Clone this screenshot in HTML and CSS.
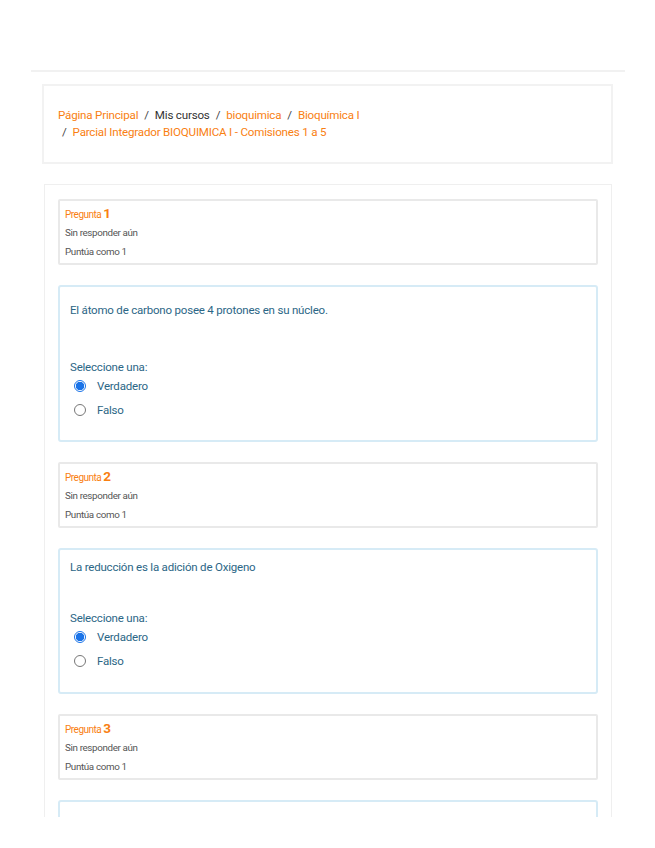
FILE: index.html
```html
<!DOCTYPE html>
<html lang="es">
<head>
<meta charset="utf-8">
<link rel="stylesheet" href="styles.css">
</head>
<body>
<div class="page">
  <div class="topbar"></div>
  <div class="container">
    <nav class="crumbs">
      <div class="crumb-line">
        <a class="link">Página Principal</a><span class="sep">/</span><span class="plain">Mis cursos</span><span class="sep">/</span><a class="link">bioquimica</a><span class="sep">/</span><a class="link">Bioquímica I</a>
      </div>
      <div class="crumb-line second">
        <span class="sep">/</span><a class="link">Parcial Integrador BIOQUIMICA I - Comisiones 1 a 5</a>
      </div>
    </nav>

    <main class="card">
      <section class="info">
        <div class="qno">Pregunta <b>1</b></div>
        <div class="meta">Sin responder aún</div>
        <div class="meta">Puntúa como 1</div>
      </section>
      <section class="content first">
        <p class="qtext">El átomo de carbono posee 4 protones en su núcleo.</p>
        <div class="prompt">Seleccione una:</div>
        <label class="opt"><span class="radio on"></span>Verdadero</label>
        <label class="opt"><span class="radio"></span>Falso</label>
      </section>

      <section class="info">
        <div class="qno">Pregunta <b>2</b></div>
        <div class="meta">Sin responder aún</div>
        <div class="meta">Puntúa como 1</div>
      </section>
      <section class="content">
        <p class="qtext">La reducción es la adición de Oxigeno</p>
        <div class="prompt">Seleccione una:</div>
        <label class="opt"><span class="radio on"></span>Verdadero</label>
        <label class="opt"><span class="radio"></span>Falso</label>
      </section>

      <section class="info">
        <div class="qno">Pregunta <b>3</b></div>
        <div class="meta">Sin responder aún</div>
        <div class="meta">Puntúa como 1</div>
      </section>
      <section class="content">
        <p class="qtext">&nbsp;</p>
      </section>
    </main>
  </div>
</div>
</body>
</html>
```

FILE: styles.css
```css
html, body {
  margin: 0;
  padding: 0;
  background: #fff;
}
body {
  font-family: Roboto, "Liberation Sans", sans-serif;
  color: #333;
}
.page {
  height: 817px;
  overflow: hidden;
}
.topbar {
  height: 70px;
  margin: 0 30px 0 31px;
  border-bottom: 2px solid #f1f1f1;
}
.container {
  padding: 12px 42px 0 42px;
  display: flex;
  flex-direction: column;
  gap: 20px;
}
.crumbs {
  height: 76px;
  border: 2px solid #f2f2f2;
  padding: 0 14px;
  display: flex;
  flex-direction: column;
  justify-content: center;
  font-size: 11.6px;
  letter-spacing: -0.2px;
  line-height: 17px;
}
.crumb-line {
  white-space: nowrap;
}
.crumb-line.second {
  padding-left: 4px;
}
.link {
  color: #f98012;
}
.plain {
  color: #333;
}
.sep {
  color: #444;
  margin: 0 6px;
}
.second .sep {
  margin-left: 0;
}
.card {
  margin: 0 1px 0 2px;
  border: 1px solid #efefef;
  padding: 14px 13px 0 13px;
  display: flex;
  flex-direction: column;
  gap: 20px;
}
.info {
  border: 2px solid #e9e9e9;
  border-radius: 2px;
  height: 58px;
  padding: 4px 5px 0 5px;
  box-sizing: content-box;
  font-size: 9.8px;
  color: #555;
  letter-spacing: -0.35px;
}
.qno {
  color: #f98012;
  font-size: 10px;
  letter-spacing: -0.5px;
  line-height: 17px;
}
.qno b {
  font-size: 13.5px;
  font-weight: 700;
  letter-spacing: 0;
}
.meta {
  line-height: 19px;
}
.content {
  border: 2px solid #d6ebf6;
  border-radius: 3px;
  padding: 8px 10px 19px 10px;
  color: #2b6686;
  font-size: 11.5px;
  letter-spacing: -0.2px;
  min-height: 60px;
}
.content.first {
  padding-top: 14px;
  padding-bottom: 18px;
}
.qtext {
  margin: 0 0 35px 0;
  line-height: 18px;
}
.first .qtext {
  margin-bottom: 41px;
}
.prompt {
  line-height: 14px;
}
.opt {
  display: flex;
  align-items: center;
  gap: 11px;
  height: 24px;
  padding-left: 4px;
}
.radio {
  width: 10px;
  height: 10px;
  border: 1.5px solid #777;
  border-radius: 50%;
  box-sizing: content-box;
  background: #fff;
}
.radio.on {
  border-color: #1a73e8;
  background: radial-gradient(circle, #1a73e8 0 4px, #fff 4.5px);
}
```
